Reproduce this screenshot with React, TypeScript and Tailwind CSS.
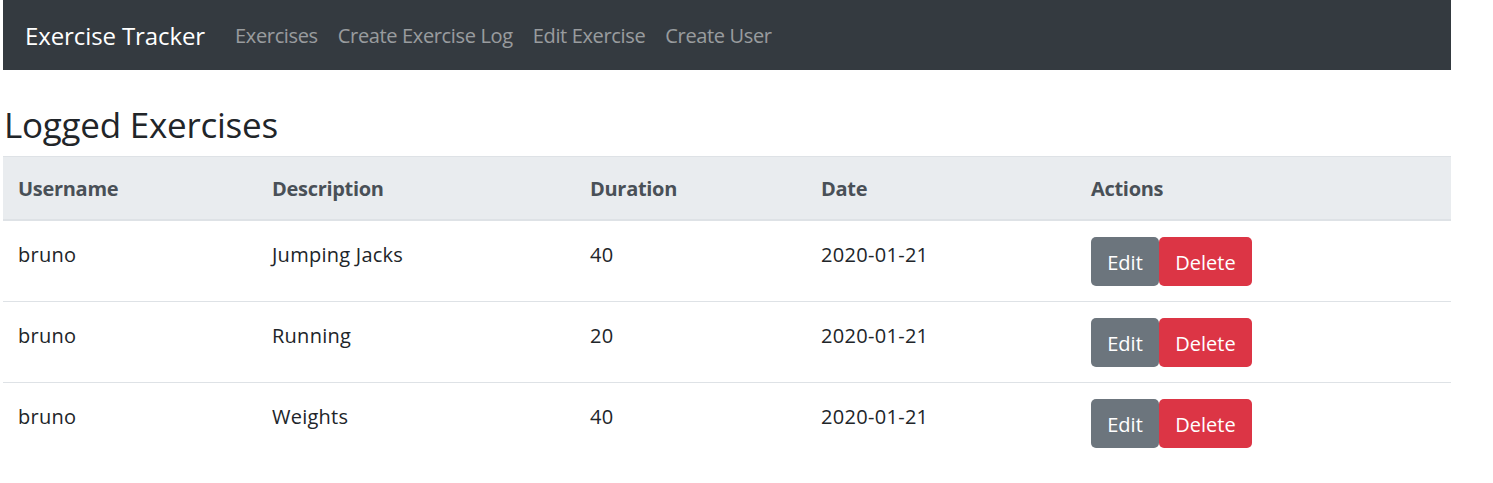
import React from "react";

const rows = [
  { u: "bruno", d: "Jumping Jacks", dur: "40", date: "2020-01-21" },
  { u: "bruno", d: "Running", dur: "20", date: "2020-01-21" },
  { u: "bruno", d: "Weights", dur: "40", date: "2020-01-21" },
];

export default function App() {
  return (
    <div className="min-h-[483px] bg-white" style={{ fontFamily: '"Open Sans", "Noto Sans", sans-serif' }}>
      <div className="ml-[3px] w-[1448px] text-[#212529]">
        <nav className="h-[70px] bg-[#343a40] flex items-center px-[20px] pt-[2px]">
          <span className="text-white text-[24px] mr-[20px] ml-[2px] tracking-[-0.1px]">Exercise Tracker</span>
          <div className="flex text-[20px] text-[rgba(255,255,255,0.5)] tracking-[-0.35px]">
            <span className="px-[10px]">Exercises</span>
            <span className="px-[10px]">Create Exercise Log</span>
            <span className="px-[10px]">Edit Exercise</span>
            <span className="px-[10px]">Create User</span>
          </div>
        </nav>
        <h3 className="mt-[34px] mb-[10px] text-[35px] leading-[42px] pl-[1px] tracking-[-0.25px]">Logged Exercises</h3>
        <table className="w-full border-collapse text-[20px] leading-[30px]">
          <thead>
            <tr className="bg-[#e9ecef] text-[#495057] border-t border-[#dee2e6] border-b-2 tracking-[-0.3px]">
              <th className="w-[254px] text-left font-bold px-[15px] pt-[17px] pb-[15px]">Username</th>
              <th className="w-[318px] text-left font-bold px-[15px] pt-[17px] pb-[15px]">Description</th>
              <th className="w-[231px] text-left font-bold px-[15px] pt-[17px] pb-[15px]">Duration</th>
              <th className="w-[270px] text-left font-bold px-[15px] pt-[17px] pb-[15px]">Date</th>
              <th className="text-left font-bold px-[15px] pt-[17px] pb-[15px]">Actions</th>
            </tr>
          </thead>
          <tbody>
            {rows.map((r, i) => (
              <tr key={i} className={i > 0 ? "border-t border-[#dee2e6]" : ""}>
                <td className="px-[15px] pt-[19px] align-top tracking-[0.25px]">{r.u}</td>
                <td className="px-[15px] pt-[19px] align-top tracking-[0.25px]">{r.d}</td>
                <td className="px-[15px] pt-[19px] align-top tracking-[0.25px]">{r.dur}</td>
                <td className="px-[15px] pt-[19px] align-top tracking-[0.3px]">{r.date}</td>
                <td className="px-[15px] pt-[16px] pb-[15px] align-top">
                  <div className="flex">
                    <button className="h-[49px] w-[68px] bg-[#6c757d] text-white rounded-[5px] text-[20px] pt-[2px]">Edit</button>
                    <button className="h-[49px] w-[93px] bg-[#dc3545] text-white rounded-[5px] text-[20px] pt-[2px]">Delete</button>
                  </div>
                </td>
              </tr>
            ))}
          </tbody>
        </table>
      </div>
    </div>
  );
}
